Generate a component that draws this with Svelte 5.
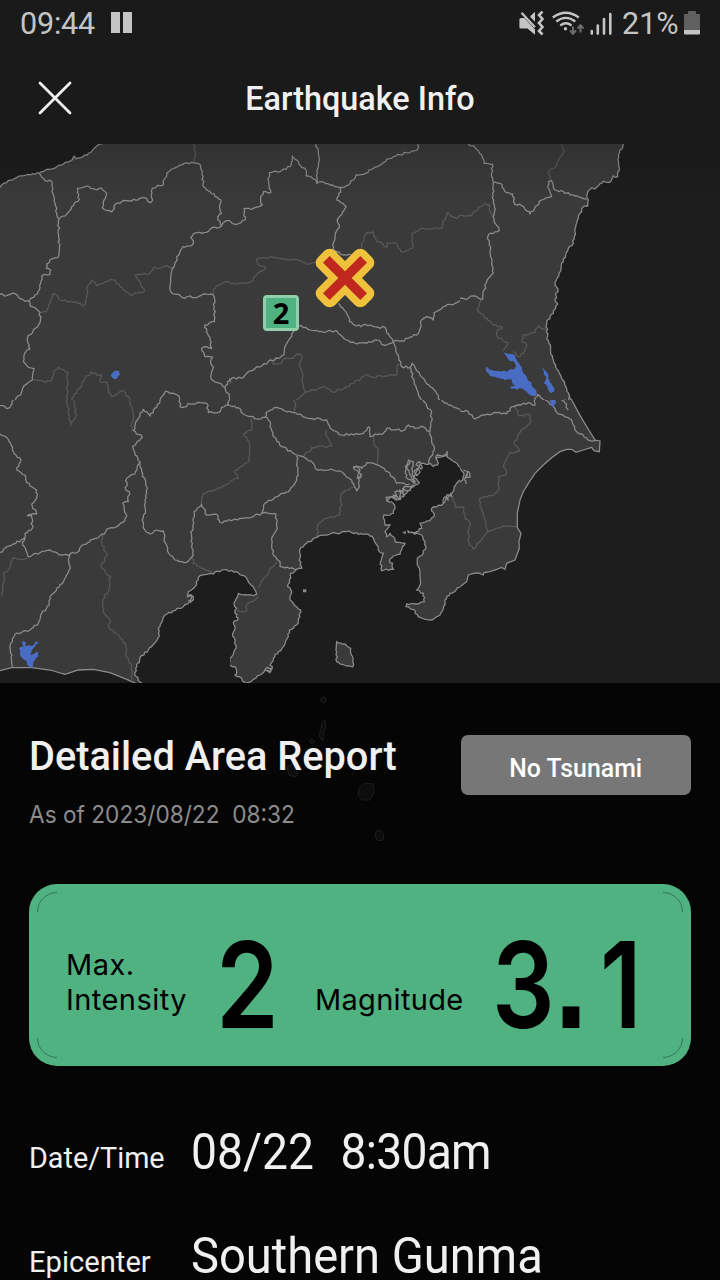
<script>
  // Each tile holds its outlines in a local space of three units per pixel.
  const tiles = [
    {
      x: 0, y: -4, w: 230, h: 260,
      sea: ['310,-20 305,12 280,28 262,45 228,56 223,49 219,59 190,72 150,88 118,100 85,103 50,113 25,122 5,135 0,142 -20,150 -20,-20'],
      lines: [
        '118,100 135,122 155,124 158,160 165,190 170,220 178,237 175,270 178,300 173,353 158,356 140,372 139,385 152,391 150,403 130,404 122,430 118,450 105,465 88,485',
        '0,462 20,467 35,461 48,463 60,476 75,484 88,485 90,497 105,503 120,517 121,545 100,570 82,595 90,627 74,640 70,665 85,682 102,686 97,720 68,745 62,765 40,785',
        '178,237 200,222 215,200 238,178 232,158 232,145 262,138 285,148 305,145 320,160 312,180 307,203 335,216 347,192 365,185 395,183 420,175 440,175 450,188 458,180 454,152 472,136 487,137 500,100 515,87 540,75 580,68 598,72 607,95 610,140 630,155 663,180 660,210 665,220 653,232 665,258',
        '665,258 630,268 612,278 580,282 572,292 580,310 575,317 548,320 530,350 524,375 515,395 511,430 513,457 535,463 555,475 565,470 590,473 610,462 640,465',
        '665,258 680,242 695,243 710,253 720,248',
        '640,465 643,500 643,545 615,555 622,580 630,600 635,625 620,620 605,625 615,650 638,652 632,670 640,680 633,717 660,730 675,743 690,715 720,712',
        '675,743 688,770 685,795',
        '538,795 538,770 497,753 480,780 470,800'
      ],
      faint: [
        '580,12 586,35 582,65',
        '120,517 138,515 152,480 158,462 170,465 180,480 210,485 228,485 250,498 258,480 262,440 275,420 290,437 310,430 330,418 345,420 360,440 390,465 433,455 420,425 405,405 450,400 460,382 480,385 500,377 518,382',
        '640,465 640,448 655,435 680,425 720,430',
        '97,720 130,725 155,722 165,690 175,682 190,688 205,697 200,740 200,790',
        '222,790 215,775 245,735 255,715 275,695 290,705 303,703 302,727 320,725 325,755 335,770 365,752 385,770 392,790'
      ],
      lakes: ['332,705 342,694 358,693 360,705 346,718 335,710']
    },
    {
      x: 230, y: -4, w: 230, h: 260,
      lines: [
        '0,243 20,253 45,240 42,206 70,205 97,195 92,180 100,155 123,157 116,130 118,98 150,95 180,80 187,48 200,60 215,82 225,85 228,108 255,118 260,130 275,125 300,135 335,142',
        '258,12 265,40 268,55 262,100 260,130',
        '335,142 360,130 378,105 400,103 430,85 460,68 490,50 530,38 563,28 563,12',
        '335,142 320,180 348,200 322,238 328,255 315,285 308,315 308,330 345,345 365,345',
        '325,490 350,520 358,545 380,558 420,555 445,562 465,562 470,578 490,605',
        '490,605 515,603 540,592 565,580 575,540 590,530 610,540 612,518 640,500 680,488 695,475 720,470',
        '200,555 240,570 280,577 320,572 350,600 380,612 410,610 440,600 460,615 490,605',
        '205,556 190,575 165,620 162,645 145,655 120,660 110,672 80,680 50,700 40,713 5,715 0,730',
        '490,605 500,640 515,680 540,682 555,735 565,760 580,785',
        '540,682 545,670 570,705 600,740 620,760 625,775 660,795'
      ],
      faint: [
        '0,430 40,430 65,425 80,405 108,382 85,375 80,358 130,352 160,358 210,362 230,373 265,362',
        '395,325 395,310 410,278 430,275 438,300 470,322 470,308 500,310 512,335 535,330 550,318 545,280 580,265 635,265 650,218 680,235 690,225 720,226',
        '120,655 130,672 155,668 165,655 190,655 200,643 215,645 208,675 218,700 220,740 230,755 190,785',
        '230,755 255,750 285,740 310,757 350,740 370,730 410,703 430,712 465,708 500,705 500,680 510,672'
      ]
    },
    {
      x: 460, y: -4, w: 260, h: 260,
      sea: ['490,-10 490,12 475,45 478,85 473,110 460,108 455,118 445,128 430,124 410,142 390,148 380,170 385,180 383,198 370,200 355,235 345,275 340,310 325,325 305,370 297,400 285,435 294,455 287,460 287,485 293,492 280,520 260,545 262,590 278,655 305,715 328,765 335,780 345,800 800,800 800,-10'],
      lines: [
        '25,12 45,22 65,45 72,70 97,72 95,100 100,128 98,160 103,200 102,245 118,272 85,285 82,295 92,320 95,370 100,400 85,415 72,450 68,478 40,468 20,478 0,475',
        '100,128 122,130 140,158 158,162 165,193 185,197 210,222 245,180 275,170 265,145 265,125 275,122 285,150 310,155 345,168 380,177',
        '226,790 225,780 232,763 262,785',
        '305,785 315,780 328,785 328,765'
      ],
      faint: [
        '305,12 312,30 290,75 265,97 272,122',
        '0,226 35,228 55,203 75,190 90,195 90,215 100,230',
        '65,480 52,510 80,535 100,555 128,563 110,575 112,590 145,612 130,630',
        '258,568 235,557 225,577 190,585 185,600 200,615 190,640 175,650 160,635'
      ],
      lakes: [
        '128,632 145,642 165,645 172,665 185,680 190,700 200,710 228,750 228,767 210,765 200,755 178,745 155,748 150,740 165,737 155,718 130,717 105,710 90,708 78,690 82,680 95,690 115,692 140,695 165,685 165,670 145,658',
        '245,680 262,700 268,720 278,738 282,755 272,760 262,740 250,730 258,718 252,695'
      ]
    },
    {
      x: 0, y: 256, w: 230, h: 283,
      smooth: ['-20,820 0,812 35,803 95,803 150,810 195,823 235,810 280,808 330,818 380,838 405,849 420,900 -20,900'],
      sea: ['900,520 720,520 700,513 665,510 640,522 600,527 585,560 565,575 562,590 580,590 580,600 568,605 550,620 520,632 490,652 475,685 478,708 455,740 420,772 410,800 404,825 425,849 425,900 900,900'],
      lines: [
        '480,0 470,22 450,48 430,28 415,55 400,92 427,112 398,138 405,165 420,185',
        '420,185 425,215 442,265 435,300 436,340 426,360 435,390 450,402 470,390 490,393 497,430 510,465 525,480 560,487 580,465 572,395 580,385 582,335 605,312 620,345 650,343 660,368 720,355',
        '420,185 405,222 380,235 378,270 388,275 385,305 368,310 380,350 375,362 350,380 320,388 313,402 285,415 245,437 238,452 210,462 185,465 150,450 120,458 85,470 68,435 75,413 40,432 0,457',
        '75,413 75,400 97,385 95,345 82,347 110,342 95,313 110,295 110,270 80,248 75,225 50,210 63,180 40,155 25,118 0,102',
        '538,-10 540,20 560,20 565,10 620,10 625,38 655,38 665,22 685,15 720,20',
        '685,15 688,-10',
        '210,462 205,480 210,498 190,545 150,590 148,615 125,640 115,670 90,690 45,703 30,745 38,800',
        '40,0 30,23 20,26 10,17 0,17',
        '562,590 575,585 572,608 565,600'
      ],
      faint: [
        '200,0 207,45 212,77 228,50 222,0',
        '387,0 400,40 395,92',
        '310,400 305,430 322,465 302,500 332,530 325,575 312,585 310,635 330,660 328,685 350,700 375,730 378,765 395,800 395,840',
        '85,470 65,478 40,473 25,510 10,520 10,550 5,590',
        '575,470 580,490 610,505 635,517',
        '605,312 610,280 650,268 720,237'
      ],
      lakes: ['65,725 78,728 75,738 100,735 105,724 118,728 100,745 90,765 115,755 115,768 105,780 98,803 85,797 75,780 60,765 57,745 70,740']
    },
    {
      x: 230, y: 256, w: 230, h: 283,
      sea: [
        '-20,505 0,511 25,518 50,535 70,560 77,573 80,583 60,584 25,580 23,590 12,610 20,625 15,640 25,655 10,668 15,680 8,700 14,730 18,745 0,775 -4,795 15,800 20,815 15,825 28,830 45,847 50,900 -20,900',
        '50,900 50,848 70,838 90,825 105,810 118,818 127,800 120,795 130,775 145,755 160,740 175,710 178,690 205,670 212,630 190,610 180,600 185,575 173,560 178,540 182,520 200,508 215,505 210,495 209,450 230,430 260,412 300,402 350,395 380,398 385,403 415,403 430,415 440,435 448,455 460,460 452,485 455,512 490,508 488,490 478,482 490,468 510,463 517,440 525,430 495,425 490,410 480,400 470,410 465,395 480,375 465,375 462,345 480,345 490,340 495,325 490,310 470,300 480,290 500,300 520,290 540,270 568,248 550,230 560,215 575,190 600,190 610,200 625,190 618,175 650,165 665,180 700,212 695,235 680,250 660,285 640,310 605,325 612,350 600,362 570,370 575,385 560,395 540,398 575,405 588,440 580,460 562,475 565,500 570,520 572,550 560,570 580,580 583,605 555,612 530,612 528,620 550,628 565,650 600,660 630,645 640,625 645,600 660,580 690,562 710,550 715,535 740,530 740,900'
      ],
      land: ['320,725 345,732 362,745 368,770 368,800 350,798 320,785 318,750', '221,570 227,570 227,575 221,575', '521,397 526,396 525,400', '534,393 539,396 535,398'],
      lines: [
        '0,17 25,23 40,42 70,50 80,57 105,52 108,38 140,22 165,33 210,42 225,52 290,60 305,88 335,105 400,100 417,80 420,110 435,102 460,100 470,85 520,92 535,75 555,85 580,80 598,95',
        '578,-5 590,18 605,35 600,95 605,125 613,150 598,175 595,190',
        '105,50 120,65 128,105 155,140 200,165 220,170 235,182 250,190 262,210 310,210 340,220 365,240 380,273 388,260 385,235 395,225 375,210 370,203 385,200 395,205 410,188 450,198 480,220 500,250 540,252',
        '200,168 203,210 200,240 180,270 155,280 105,310 95,340 70,350 30,355 0,363',
        '95,340 135,340 142,385 125,420 128,460 150,485 150,500 200,508',
        '635,0 655,15 690,28 720,38',
        '553,250 528,232 526,200 535,180 550,184 545,205 555,250 530,200 540,185',
        '552,212 562,205 570,216 560,227 552,212',
        '575,208 558,195 570,185 575,208',
        '470,305 468,292 500,287 495,275 520,270 522,260 550,255 540,272 518,265 522,288 508,270 512,298 490,285 500,300',
        '618,175 622,165 645,168 652,155 650,170',
        '700,212 712,215 700,222 715,230 700,238 690,240',
        '640,310 645,290 655,300 650,285 665,290 662,278',
        '370,200 380,198 390,212 382,235 395,230',
        '105,810 112,802 124,806 122,816 108,812'
      ],
      faint: [
        '190,0 198,20 190,38',
        '65,55 65,90 40,100 58,125 58,180 45,190 15,212 25,235 0,245',
        '290,90 288,105 305,138 245,142 240,155 225,160 220,170',
        '430,110 432,130 445,150 440,195',
        '370,262 335,280 330,345 290,355 265,372 260,408',
        '140,485 100,535 83,563',
        '85,590 50,615 50,633 22,633',
        '665,290 675,320 705,325 715,360'
      ]
    },
    {
      x: 460, y: 256, w: 260, h: 283,
      smooth: ['335,0 325,-20 800,-20 800,900 -20,900 -20,570 0,560 20,545 25,525 40,520 55,519 70,525 72,518 90,515 110,508 125,502 135,508 140,490 165,480 178,445 177,425 183,400 172,383 172,340 180,300 190,275 205,250 225,220 250,195 275,173 300,155 320,148 335,148 348,157 370,150 395,142 402,152 418,155 420,123 405,120 365,55'],
      sea: ['-20,195 0,205 8,215 12,225 8,240 0,245 -20,270'],
      lines: [
        '0,32 25,35 45,57 75,45 110,38 140,42 155,20 175,15 205,8 225,15 224,-5',
        '255,0 275,15 295,42 335,60 350,95 390,122 410,122',
        '305,2 320,12 318,22 325,30',
        '10,210 26,215 30,232 15,234 22,218 12,238 18,252'
      ],
      faint: [
        '165,20 178,48 210,42 210,70 180,98 162,130 178,155 150,158 130,200 140,220 115,230 118,265 100,285 60,295 60,320 75,360 85,395 130,378 170,380',
        '85,395 40,447 28,435 25,390 32,375 15,350 12,322 0,320'
      ],
      lakes: ['270,0 286,0 288,10 280,22 272,14']
    }
  ];

  let seed = 7;
  const rnd = () => (seed = (seed * 16807) % 2147483647) / 2147483647 - 0.5;

  // Breaks the long segments of an outline into short uneven steps.
  function rough(str, closed) {
    const p = str.split(' ').map((s) => s.split(',').map(Number));
    let d = `M${p[0]}`;
    for (let i = 1; i < p.length; i++) {
      const [ax, ay] = p[i - 1];
      const [bx, by] = p[i];
      const len = Math.hypot(bx - ax, by - ay);
      const n = len > 150 ? 1 : Math.max(1, Math.round(len / 7));
      for (let k = 1; k < n; k++) {
        const o = rnd() * 6.5;
        const x = ax + ((bx - ax) * k) / n - ((by - ay) / len) * o;
        const y = ay + ((by - ay) * k) / n + ((bx - ax) / len) * o;
        d += `L${x.toFixed(1)},${y.toFixed(1)}`;
      }
      d += `L${bx},${by}`;
    }
    return closed ? d + 'Z' : d;
  }
</script>

<div class="screen">
  <div class="status">
    <span class="time">09:44</span>
    <svg class="pause" width="21" height="22" viewBox="0 0 21 22"><path d="M0 0h9v21H0zM12 0h9v21h-9z" fill="#c4c4c4" /></svg>
    <svg class="signals" width="94" height="26" viewBox="518 11 94 26" fill="none">
      <path d="M521 18h3.500l10.500 11.500v5.200L527.500 28.500H521q-1.600 0-1.600-1.500v-7.500Q519.400 18 521 18z" fill="#c4c4c4" />
      <path d="M530.500 16l4.500-4.200v10l-4.500-4.500z" fill="#c4c4c4" />
      <path d="M521.500 12.800l13.500 14.500" stroke="#c4c4c4" stroke-width="2.200" />
      <path d="M542.500 11.500l-3.500 3.500 3.500 4-3.500 4 3.500 4-3.500 4 3.500 3.500" stroke="#c4c4c4" stroke-width="2.600" />
      <path d="M552.800 17.500q13-9.500 26 0M556.300 21.500q9.500-7.200 19 0M560.300 25.500q5.700-4.400 11.200 0" stroke="#c4c4c4" stroke-width="2.300" />
      <circle cx="565.500" cy="28.800" r="1.700" fill="#c4c4c4" />
      <path d="M573 26.500v7M570 30.500l3 3.200 3-3.200M580.500 32.500v-7M577.500 28.500l3-3.200 3 3.200" stroke="#6c6c6c" stroke-width="2" />
      <path d="M591.800 31v2.600M597.800 25.500v8.100M604 19v14.600M610.300 14v19.600" stroke="#c4c4c4" stroke-width="2.600" stroke-linecap="round" />
    </svg>
    <span class="pct">21%</span>
    <svg class="battery" width="16" height="24" viewBox="0 0 16 24"><path d="M5 0h6q1 0 1 1v2h3q1 0 1 1v15H0V4q0-1 1-1h3V1q0-1 1-1z" fill="#606060" /><path d="M0 19h16v3.500q0 1-1 1H1q-1 0-1-1z" fill="#c4c4c4" /></svg>
  </div>

  <header>
    <svg class="close" width="34" height="34" viewBox="0 0 34 34"><path d="M2 2l30 30M32 2L2 32" stroke="#f0f0f0" stroke-width="2.800" stroke-linecap="round" /></svg>
    <h1>Earthquake Info</h1>
  </header>

  <div class="map">
    <svg width="720" height="539" viewBox="0 0 720 539">
      <rect width="720" height="539" fill="#3a3a3a" />
      {#each tiles as t}
        <svg x={t.x} y={t.y} width={t.w} height={t.h} viewBox="0 0 {t.w * 3} {t.h * 3}">
          {#each t.faint as f}<path class="faint" d={rough(f)} />{/each}
          {#each t.smooth ?? [] as s}<path class="sea" d="M{s}Z" />{/each}
          {#each t.sea ?? [] as s}<path class="sea" d={rough(s, true)} />{/each}
          {#each t.land ?? [] as s}<path class="land" d={rough(s, true)} />{/each}
          {#each t.lines as l}<path class="line" d={rough(l)} />{/each}
          {#each t.lakes ?? [] as l}<path class="lake" d={rough(l, true)} />{/each}
        </svg>
      {/each}
      <g transform="translate(345 134) rotate(45)">
        <path class="cross" d="M-4.700-26.400h9.400v21.700h21.700v9.400H4.700v21.700h-9.400V4.700h-21.700v-9.400h21.700z" />
      </g>
    </svg>
    <div class="shade"></div>
    <div class="badge">2</div>
  </div>

  <main>
    <svg class="isles" width="120" height="460" viewBox="280 690 120 460">
      <path d="M321 698l4-1 1 4-2 2-3-2zM325 710h1M322 722l3-2 1 6-2 6-1 9-4-5 2-6zM309 741l3-2 3 3-3 2zM287 767l8-4 5 6-4 8-7-2zM359 788l6-5 8 1 1 9-4 7-8 0-4-5zM376 832l4-2 4 4-1 6-5 1-3-5zM407 1127l4 3 0 5h-4z" />
    </svg>
    <section class="report">
      <div>
        <h2>Detailed Area Report</h2>
        <p>As of 2023/08/22&nbsp; 08:32</p>
      </div>
      <div class="tsunami"><span>No Tsunami</span></div>
    </section>

    <section class="card">
      <svg class="corners" width="646" height="166" viewBox="0 0 646 166">
        <path d="M.5 20A19.500 19.500 0 0 1 20 .5M626 .5A19.500 19.500 0 0 1 645.500 20M645.500 146A19.500 19.500 0 0 1 626 165.500M20 165.500A19.500 19.500 0 0 1 .5 146" />
      </svg>
      <span class="label max">Max.<br />Intensity</span>
      <span class="num two">2</span>
      <span class="label mag">Magnitude</span>
      <span class="num mval">3<span class="point">.</span>1</span>
    </section>

    <dl>
      <div class="row">
        <dt class="dt">Date/Time</dt>
        <dd class="when">08/22&nbsp; <span class="clock">8:30am</span></dd>
      </div>
      <div class="row last">
        <dt class="ep">Epicenter</dt>
        <dd class="where">Southern Gunma</dd>
      </div>
    </dl>
  </main>
</div>

<style>
  :global(body) { margin: 0; background: #050505; overflow: hidden; }
  .screen { width: 720px; height: 1280px; overflow: hidden; background: #050505; color: #f0f0f0; font-family: Roboto, sans-serif; }
  h1, h2, p, dl, dt, dd { margin: 0; font-weight: 400; }
  .status { display: flex; height: 54px; background: #1a1a1a; color: #c4c4c4; font-size: 30.5px; line-height: 48px; }
  .time { width: 91px; padding-left: 20px; letter-spacing: -0.2px; }
  .pause { margin-top: 12px; }
  .signals { margin: 11px 0 0 386px; }
  .pct { width: 62px; margin-left: 10px; }
  .battery { margin-top: 11px; }
  header { display: grid; grid-template-columns: 110px 500px 110px; align-items: center; box-sizing: border-box; height: 90px; padding-bottom: 2px; background: #1a1a1a; }
  .close { margin-left: 38px; }
  h1 { text-align: center; font-size: 34px; font-weight: 500; line-height: 40px; transform: scaleX(0.952); }
  .map { position: relative; height: 539px; }
  .map > svg { display: block; }
  .shade { position: absolute; inset: 0 0 auto; height: 60px; background: linear-gradient(rgba(0, 0, 0, 0.14), transparent); }
  .line, .faint { fill: none; stroke: #8c8c8c; stroke-width: 3.8; stroke-linejoin: round; }
  .faint { stroke: #585858; }
  .sea { fill: #1d1d1d; stroke: #8c8c8c; stroke-width: 3.8; }
  .land { fill: #3a3a3a; stroke: #8c8c8c; stroke-width: 3.8; }
  .lake { fill: #4a6dc4; }
  .cross { fill: #c0271f; stroke: #f0c23c; stroke-width: 14.6; stroke-linejoin: round; paint-order: stroke; }
  .badge { position: absolute; left: 263px; top: 151px; box-sizing: border-box; width: 36px; height: 36px; border: 3px solid #8fcfab; border-radius: 4px; background: #50b181; color: #000; font: 700 29px/29px "Noto Sans", sans-serif; text-align: center; }
  main { position: relative; padding: 0 29px; }
  .isles { position: absolute; left: 280px; top: 7px; fill: #0c0c0c; stroke: #1d1d1d; stroke-width: 1; }
  .report { position: relative; display: flex; justify-content: space-between; height: 149px; padding-top: 52px; }
  h2 { font-size: 41px; font-weight: 500; line-height: 42px; white-space: nowrap; transform: scaleX(0.969); transform-origin: left; }
  p { margin-top: 23px; color: #8c8c8c; font: 400 24px/30px Inter, sans-serif; white-space: nowrap; transform: scaleX(0.944); transform-origin: left; }
  .tsunami { display: flex; align-items: center; justify-content: center; width: 230px; height: 60px; border-radius: 7px; background: #777; color: #fff; font-size: 26px; font-weight: 500; }
  .tsunami span { padding-top: 6px; transform: scaleX(0.955); }
  .card { position: relative; display: flex; align-items: flex-start; box-sizing: border-box; height: 182px; border-radius: 28px; background: #50b181; color: #000; }
  .corners { position: absolute; left: 8px; top: 8px; fill: none; stroke: #2f7a55; stroke-width: 1; }
  .label { font: 400 29px/35px Inter, sans-serif; letter-spacing: 0.45px; white-space: nowrap; }
  .max { width: 150px; margin-left: 37px; padding-top: 63px; }
  .num { box-sizing: border-box; height: 182px; padding-top: 10px; font: 600 120px/182px Inter, sans-serif; transform: scaleX(0.82); transform-origin: left; white-space: nowrap; }
  .two { width: 99px; transform: scaleX(0.84); }
  .point { font: 700 145px/0 "Liberation Sans", sans-serif; letter-spacing: 15px; }
  .mag { width: 177px; padding-top: 98px; letter-spacing: 0.3px; }
  .row { display: flex; align-items: baseline; height: 104px; }
  .last { height: 93px; }
  dl { padding-top: 52px; }
  dt { width: 162px; font-size: 30px; transform: translateY(-1px) scaleX(0.958); transform-origin: left; }
  dd { font-size: 50px; line-height: 68px; white-space: nowrap; transform: scaleX(0.924); transform-origin: left; }
  .clock { margin-left: 4px; letter-spacing: -0.8px; }
  .ep { transform: translateY(-1px) scaleX(0.972); }
  .where { transform: scaleX(0.942); }
</style>
